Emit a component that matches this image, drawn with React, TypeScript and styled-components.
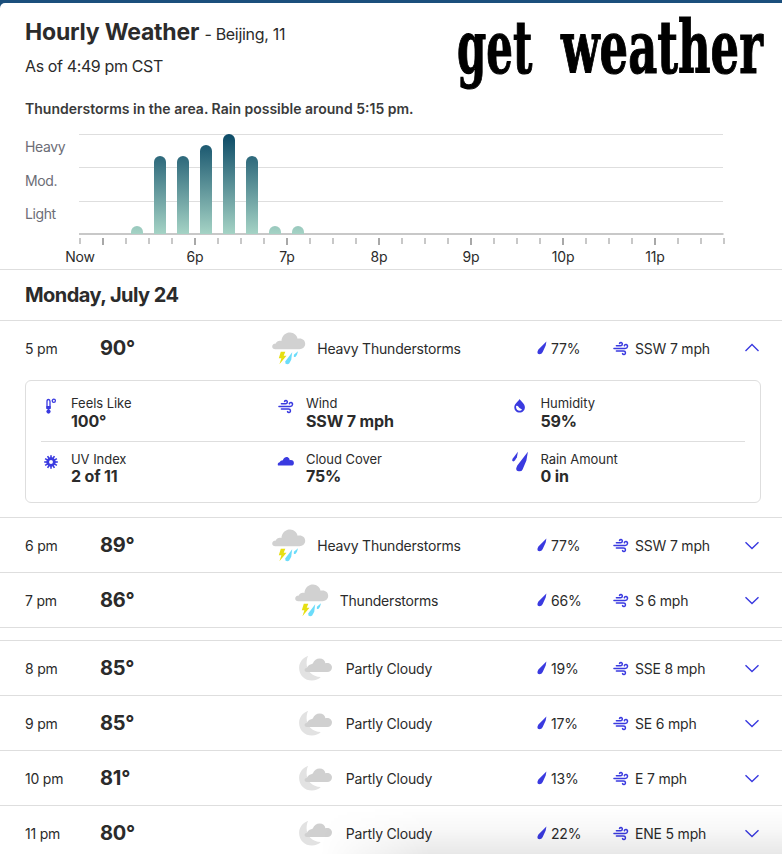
import React from 'react';
import styled, { createGlobalStyle, css } from 'styled-components';

const Global = createGlobalStyle`
  * { box-sizing: border-box; }
  html, body { margin: 0; padding: 0; }
  body {
    background: #1b4f7c;
    font-family: Inter, "Liberation Sans", sans-serif;
    color: #2b2b2b;
    overflow: hidden;
  }
`;

const LINE = '#dedede';
const BLUE = '#3a3ae0';

const Page = styled.main`
  position: relative;
  width: 782px;
  height: 854px;
  padding-top: 3px;
  overflow: hidden;
  background: #1b4f7c;
`;

const Card = styled.section`
  height: 851px;
  background: #fff;
  border-top-left-radius: 5px;
`;

const Header = styled.header`
  display: flex;
  justify-content: space-between;
  height: 97px;
  padding-left: 25px;
`;

const Heading = styled.div`
  padding-top: 12px;
`;

const Title = styled.h1`
  margin: 0;
  font-size: 23px;
  line-height: 34px;
  font-weight: 700;
  letter-spacing: -0.2px;
  white-space: nowrap;
`;

const Place = styled.span`
  font-size: 16px;
  font-weight: 400;
  letter-spacing: -0.3px;
`;

const AsOf = styled.div`
  margin-top: 2px;
  font-size: 16px;
  line-height: 26px;
  letter-spacing: -0.38px;
`;

const Slogan = styled.svg`
  display: block;
  width: 330px;
  height: 97px;
`;

const Summary = styled.p`
  margin: 0;
  padding-left: 25px;
  font-size: 14px;
  line-height: 18px;
  font-weight: 600;
  color: #3a3a3a;
  white-space: nowrap;
`;

const Chart = styled.div`
  display: grid;
  grid-template-columns: 54px 646px;
  height: 151px;
  padding: 16px 0 0 25px;
`;

const Levels = styled.div`
  display: flex;
  flex-direction: column;
  font-size: 14px;
  letter-spacing: -0.4px;
  color: #6c6d76;
  line-height: 33.5px;
  margin-top: -3.6px;
`;

const Plot = styled.svg`
  display: block;
  width: 646px;
  height: 112px;
  overflow: visible;
`;

const Hours = styled.div`
  display: grid;
  grid-template-columns: repeat(7, 92px);
  margin: 1px 0 0 -22px;
  font-size: 14px;
  line-height: 20px;
  letter-spacing: -0.2px;
`;

const Hour = styled.span<{ $first?: boolean }>`
  width: ${(p) => (p.$first ? '46px' : '92px')};
  text-align: center;
`;

const DayTitle = styled.h2`
  display: flex;
  align-items: center;
  height: 51px;
  margin: 0;
  padding-left: 25px;
  border-top: 1px solid ${LINE};
  font-size: 20px;
  font-weight: 700;
  letter-spacing: -0.55px;
`;

const Row = styled.div<{ $gap?: boolean }>`
  display: grid;
  grid-template-columns: 75px 115px 302px 76px 151px 16px;
  align-items: center;
  height: 55px;
  padding-left: 25px;
  border-top: 1px solid ${LINE};
  font-size: 14px;
  letter-spacing: -0.2px;
  ${(p) =>
    p.$gap &&
    css`
      margin-top: 12px;
    `}
`;

const Divider = styled.div`
  height: 1px;
  background: ${LINE};
`;

const Temp = styled.strong`
  font-size: 20px;
  font-weight: 700;
`;

const Condition = styled.div`
  display: flex;
  justify-content: center;
  align-items: center;
  gap: 10px;
  white-space: nowrap;
`;

const ConditionIcon = styled.svg`
  width: 36px;
  height: 36px;
  flex: none;
  overflow: visible;
`;

const Metric = styled.div<{ $gap: number; $indent?: number }>`
  display: flex;
  align-items: center;
  gap: ${(p) => p.$gap}px;
  padding-left: ${(p) => p.$indent ?? 0}px;
  white-space: nowrap;
`;

const Glyph = styled.svg<{ $w: number; $h: number }>`
  display: block;
  flex: none;
  width: ${(p) => p.$w}px;
  height: ${(p) => p.$h}px;
`;

const Details = styled.div`
  height: 123px;
  margin: 5px 21px 14px 25px;
  padding: 0 15px;
  border: 1px solid ${LINE};
  border-radius: 6px;
`;

const DetailRow = styled.div<{ $last?: boolean }>`
  display: grid;
  grid-template-columns: 235px 234.5px 1fr;
  height: ${(p) => (p.$last ? 60 : 61)}px;
  padding-top: ${(p) => (p.$last ? 8 : 13)}px;
  border-bottom: ${(p) => (p.$last ? '0' : `1px solid ${LINE}`)};
`;

const Detail = styled.div`
  display: flex;
`;

const DetailIcon = styled.div<{ $top: number; $left: number }>`
  width: 30px;
  height: 24px;
  padding-top: ${(p) => p.$top}px;
  padding-left: ${(p) => p.$left}px;
`;

const DetailLabel = styled.div`
  font-size: 13px;
  line-height: 18px;
  letter-spacing: -0.05px;
`;

const DetailValue = styled.div<{ $low?: boolean }>`
  font-size: 16px;
  line-height: ${(p) => (p.$low ? 19 : 17)}px;
  font-weight: 700;
  letter-spacing: -0.15px;
`;

const BottomShade = styled.div`
  position: absolute;
  left: 320px;
  right: 0;
  bottom: 0;
  height: 46px;
  background: linear-gradient(rgba(0, 0, 0, 0), rgba(0, 0, 0, 0.03) 50%, rgba(0, 0, 0, 0.09));
  mask-image: linear-gradient(90deg, transparent, #000 110px);
  pointer-events: none;
`;

const bars = [
  { x: 58, top: 92 },
  { x: 81, top: 22 },
  { x: 104, top: 22 },
  { x: 127, top: 11 },
  { x: 150, top: 0 },
  { x: 173, top: 22 },
  { x: 196, top: 92 },
  { x: 219, top: 92 },
];

const barPath = (x: number, top: number) =>
  `M${x - 6} 100 V${top + 6} A6 6 0 0 1 ${x + 6} ${top + 6} V100 Z`;

function RainPlot() {
  return (
    <Plot viewBox="0 0 646 112">
      <defs>
        <linearGradient id="rain" gradientUnits="userSpaceOnUse" x1="0" y1="0" x2="0" y2="100">
          <stop offset="0" stopColor="#0b4a66" />
          <stop offset="1" stopColor="#a5d3c5" />
        </linearGradient>
      </defs>
      {[0, 33, 67].map((y) => (
        <rect key={y} x="0" y={y} width="644" height="1" fill={LINE} />
      ))}
      <rect x="0" y="99" width="644.5" height="2" fill="#c8c8c8" />
      {bars.map((b) => (
        <path key={b.x} d={barPath(b.x, b.top)} fill="url(#rain)" />
      ))}
      {Array.from({ length: 29 }, (_, i) => {
        const major = i % 4 === 1;
        return (
          <rect
            key={i}
            x={i * 23}
            y="104"
            width="2"
            height={major ? 7 : 6}
            fill={major ? '#a8a8a8' : '#c8c8c8'}
          />
        );
      })}
    </Plot>
  );
}

function StormIcon() {
  return (
    <ConditionIcon viewBox="0 0 36 36">
      <path
        d="M4.5 19.2 C1.8 19.2 1.2 18 1.2 16.6 C1.2 14.4 3.3 13.3 4.9 13.5 C5.4 11.2 8.4 10.2 10.4 11.1 C11 5 15 2.4 19 2.4 C23 2.4 26.2 5.4 26.6 8.8 C31.3 7.8 34.2 10.6 34.2 13.8 C34.2 17 31.6 19.2 28.5 19.2 Z"
        fill="#d1d1d1"
      />
      <path d="M9.8 21.7 H14.3 L12.7 25.7 H15.5 L8.4 34.3 L10.4 28.2 H7.8 Z" fill="#e6df12" />
      <path d="M21.2 22.2 L20.2 29.8 L18.2 33.4 Q16.6 34.8 14.4 33.6 V31.2 Z" fill="#6bdcfa" />
      <path d="M27 21.2 L26 24.8 L24.4 27 H22.9 V24.8 Z" fill="#6bdcfa" />
    </ConditionIcon>
  );
}

function MoonCloudIcon() {
  return (
    <ConditionIcon viewBox="0 0 36 36">
      <path
        d="M8.2 5.8 C2.7 8 -0.9 12.5 -0.9 17.9 C-0.9 25.1 4.8 30.5 11.8 30.5 C15.5 30.5 18.8 29 20.8 26.9 C12 26.9 6.4 20.3 6.6 12.9 C6.7 10.3 7.1 7.8 8.2 5.8 Z"
        fill="#e2e2e2"
      />
      <path
        d="M7 22.1 C4 22.1 3.8 18.5 6.5 18.1 C7 18 7.1 17.8 7.3 17.1 C8.4 14.7 10.8 14.5 12.8 13.5 C14.2 9.9 16.6 8.5 19.6 8.5 C22.8 8.5 25 10.6 25.4 13.2 C29.1 12.3 32 14.5 32 17.3 C32 20.3 30 22.1 27.2 22.1 Z"
        fill="#d0d0d0"
      />
    </ConditionIcon>
  );
}

function WindIcon() {
  return (
    <Glyph $w={16} $h={15} viewBox="0 0 17 15">
      <g fill="none" stroke={BLUE} strokeWidth="1.55" strokeLinecap="round">
        <path d="M3.6 4.6 H8 C10.4 4.6 10.6 1.3 8.5 1.1 Q7.2 1.1 6.9 2.1" />
        <path d="M1 7.4 H12.8 C16 7.4 16.2 3.5 13.8 3.3 Q12.3 3.2 12 4.6" />
        <path d="M3.6 10.2 H11 C14 10.2 13.7 14 11.6 13.8 Q10.5 13.8 10.1 12.9" />
      </g>
    </Glyph>
  );
}

function DropIcon() {
  return (
    <Glyph $w={10} $h={14} viewBox="0 0 10 14">
      <path
        d="M9.4 0.6 L8.7 4.4 L5.6 11.2 Q4.7 13.3 2.4 13.3 Q0.3 13.3 0.4 11.2 Q0.5 10.1 1.4 8.6 Z"
        fill={BLUE}
      />
    </Glyph>
  );
}

function ThermoIcon() {
  return (
    <Glyph $w={20} $h={20} viewBox="0 0 20 20">
      <g fill="none" stroke={BLUE} strokeWidth="1.3">
        <path d="M6 10.5 V3.5 Q6 1.5 7.5 1.5 Q9 1.5 9 3.5 V10.5" />
        <circle cx="12.8" cy="2.8" r="1.6" />
      </g>
      <rect x="5.4" y="8" width="4.2" height="3" fill={BLUE} />
      <rect x="6.6" y="10" width="1.8" height="3" fill={BLUE} />
      <circle cx="7.5" cy="13.6" r="2.1" fill={BLUE} />
    </Glyph>
  );
}

function SunIcon() {
  return (
    <Glyph $w={20} $h={20} viewBox="0 0 20 20">
      <g stroke={BLUE} strokeWidth="1.6">
        {Array.from({ length: 12 }, (_, i) => (
          <line key={i} x1="10" y1="3.2" x2="10" y2="6.2" transform={`rotate(${i * 30} 10 10)`} />
        ))}
      </g>
      <circle cx="10" cy="10" r="3.3" fill="none" stroke={BLUE} strokeWidth="2.7" />
    </Glyph>
  );
}

function CloudIcon() {
  return (
    <Glyph $w={20} $h={20} viewBox="0 0 20 20">
      <path
        d="M2 13.5 Q1 11.2 3.6 10.2 Q4.4 8.4 6.8 8.2 C7.8 5.4 10 4.7 11.4 5.1 Q13.6 5.8 13.8 8.2 C16.4 7.7 17.9 9.2 17.9 10.9 Q17.8 13.5 15.2 13.5 Z"
        fill={BLUE}
      />
    </Glyph>
  );
}

function HumidityIcon() {
  return (
    <Glyph $w={20} $h={20} viewBox="0 0 20 20">
      <path
        d="M8.6 2 C10 4.6 13.9 6.6 13.9 10.2 C13.9 13.3 11.6 15.6 8.6 15.6 C5.6 15.6 3.3 13.3 3.3 10.2 C3.3 6.6 7.4 4.6 8.6 2 Z"
        fill={BLUE}
      />
      <path
        d="M5 9.3 C6.4 8.2 7 9.2 8 10.5 C9 11.7 10.8 11.9 11 12.8 C9.3 14.8 4.7 13.8 5 9.3 Z"
        fill="#fff"
      />
    </Glyph>
  );
}

function RainIcon() {
  return (
    <Glyph $w={20} $h={24} viewBox="1 0 20 24">
      <path d="M7.9 0.8 L6.9 6.3 L4.9 9.6 Q3.8 10.9 2.5 10.1 Q1.7 9.4 2.6 7.7 Z" fill={BLUE} />
      <path
        d="M17.9 0.8 L16.4 9.6 L12.6 18.4 Q11.6 20.6 8.8 20.2 Q6 19.8 6.2 17.4 Q6.4 16.2 7.3 14.4 Z"
        fill={BLUE}
      />
    </Glyph>
  );
}

function Chevron({ up }: { up?: boolean }) {
  return (
    <Glyph $w={16} $h={10} viewBox="0 0 16 10">
      <path
        d={up ? 'M1.5 8 L8 1.6 L14.5 8' : 'M1.5 2.2 L8 8.6 L14.5 2.2'}
        fill="none"
        stroke={BLUE}
        strokeWidth="1.4"
      />
    </Glyph>
  );
}

interface HourData {
  time: string;
  temp: string;
  sky: string;
  rain: string;
  wind: string;
}

const early: HourData[] = [
  { time: '6 pm', temp: '89°', sky: 'Heavy Thunderstorms', rain: '77%', wind: 'SSW 7 mph' },
  { time: '7 pm', temp: '86°', sky: 'Thunderstorms', rain: '66%', wind: 'S 6 mph' },
];

const late: HourData[] = [
  { time: '8 pm', temp: '85°', sky: 'Partly Cloudy', rain: '19%', wind: 'SSE 8 mph' },
  { time: '9 pm', temp: '85°', sky: 'Partly Cloudy', rain: '17%', wind: 'SE 6 mph' },
  { time: '10 pm', temp: '81°', sky: 'Partly Cloudy', rain: '13%', wind: 'E 7 mph' },
  { time: '11 pm', temp: '80°', sky: 'Partly Cloudy', rain: '22%', wind: 'ENE 5 mph' },
];

function HourRow({ data, open, gap }: { data: HourData; open?: boolean; gap?: boolean }) {
  return (
    <Row $gap={gap}>
      <span>{data.time}</span>
      <Temp>{data.temp}</Temp>
      <Condition>
        {data.sky === 'Partly Cloudy' ? <MoonCloudIcon /> : <StormIcon />}
        <span>{data.sky}</span>
      </Condition>
      <Metric $gap={4} $indent={20}>
        <DropIcon />
        <span>{data.rain}</span>
      </Metric>
      <Metric $gap={6} $indent={20}>
        <WindIcon />
        <span>{data.wind}</span>
      </Metric>
      <Chevron up={open} />
    </Row>
  );
}

const details = [
  [
    { label: 'Feels Like', value: '100°', Icon: ThermoIcon, top: 4, left: 0 },
    { label: 'Wind', value: 'SSW 7 mph', Icon: WindIcon, top: 5, left: 2 },
    { label: 'Humidity', value: '59%', Icon: HumidityIcon, top: 3, left: 0 },
  ],
  [
    { label: 'UV Index', value: '2 of 11', Icon: SunIcon, top: 2, left: 0 },
    { label: 'Cloud Cover', value: '75%', Icon: CloudIcon, top: 2, left: 0 },
    { label: 'Rain Amount', value: '0 in', Icon: RainIcon, top: 1, left: 0 },
  ],
];

export default function App() {
  return (
    <>
      <Global />
      <Page>
        <Card>
          <Header>
            <Heading>
              <Title>
                Hourly Weather <Place>- Beijing, 11</Place>
              </Title>
              <AsOf>As of 4:49 pm CST</AsOf>
            </Heading>
            <Slogan viewBox="0 0 330 97">
              <g
                fontFamily="DejaVu Serif"
                fontWeight="700"
                fontSize="73"
                fill="#000"
                stroke="#000"
                strokeWidth="1.2"
              >
                <text transform="translate(5 69.5) scale(0.57 1)" textLength="132" lengthAdjust="spacingAndGlyphs">
                  get
                </text>
                <text transform="translate(109 69.5) scale(0.59 1)" textLength="342" lengthAdjust="spacingAndGlyphs">
                  weather
                </text>
              </g>
            </Slogan>
          </Header>
          <Summary>Thunderstorms in the area. Rain possible around 5:15 pm.</Summary>
          <Chart>
            <Levels>
              <span>Heavy</span>
              <span>Mod.</span>
              <span>Light</span>
            </Levels>
            <div>
              <RainPlot />
              <Hours>
                <Hour $first>Now</Hour>
                {['6p', '7p', '8p', '9p', '10p', '11p'].map((h) => (
                  <Hour key={h}>{h}</Hour>
                ))}
              </Hours>
            </div>
          </Chart>
          <DayTitle>Monday, July 24</DayTitle>
          <HourRow
            open
            data={{ time: '5 pm', temp: '90°', sky: 'Heavy Thunderstorms', rain: '77%', wind: 'SSW 7 mph' }}
          />
          <Details>
            {details.map((group, i) => (
              <DetailRow key={i} $last={i === 1}>
                {group.map(({ label, value, Icon, top, left }) => (
                  <Detail key={label}>
                    <DetailIcon $top={top} $left={left}>
                      <Icon />
                    </DetailIcon>
                    <div>
                      <DetailLabel>{label}</DetailLabel>
                      <DetailValue $low={i === 0}>{value}</DetailValue>
                    </div>
                  </Detail>
                ))}
              </DetailRow>
            ))}
          </Details>
          {early.map((d) => (
            <HourRow key={d.time} data={d} />
          ))}
          <Divider />
          {late.map((d, i) => (
            <HourRow key={d.time} data={d} gap={i === 0} />
          ))}
        </Card>
        <BottomShade />
      </Page>
    </>
  );
}
